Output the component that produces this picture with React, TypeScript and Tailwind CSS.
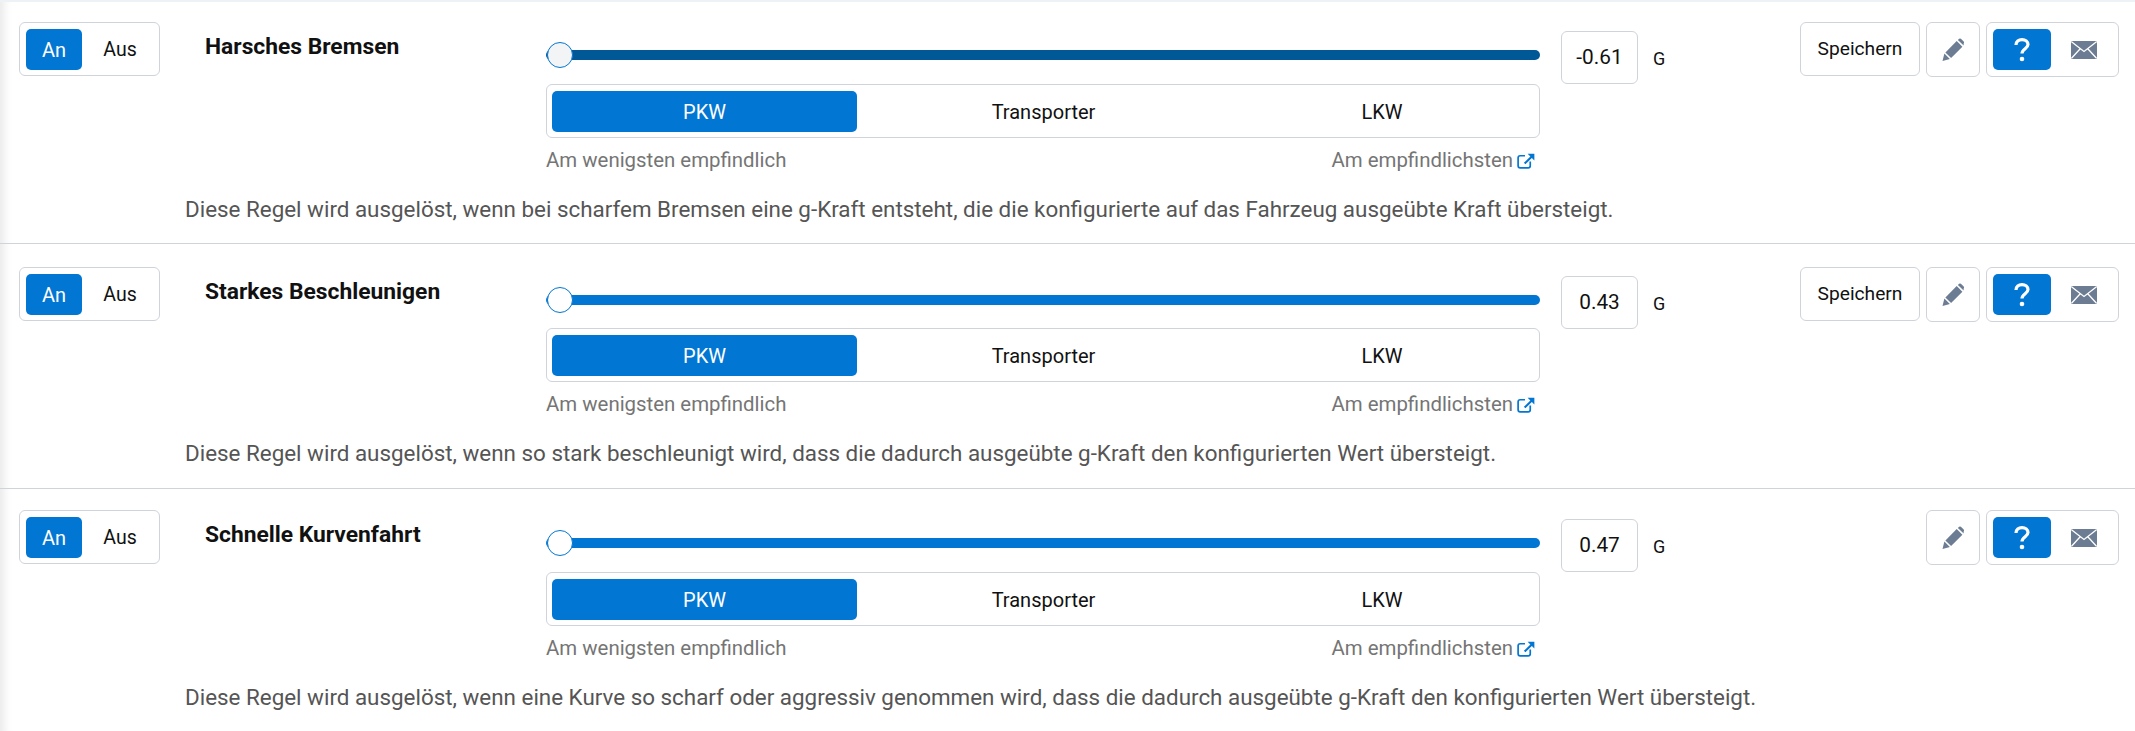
function PencilIcon() {
  return (
    <svg viewBox="0 0 24 24" className="h-[24px] w-[24px] fill-[#6b7c93]" aria-hidden>
      <path d="M1.5 23 L3.4 15.6 L8.9 21.1 Z" />
      <path d="M4.4 14.4 L15.7 3.1 L21.4 8.8 L10.1 20.1 Z" />
      <path d="M16.9 1.9 L18.1 0.8 Q19 0 19.9 0.8 L22.7 3.6 Q23.5 4.5 22.7 5.4 L22.6 7.6 Z" />
    </svg>
  );
}

function EnvelopeIcon() {
  return (
    <svg viewBox="0 0 26 18" className="h-[18px] w-[26px]" aria-hidden>
      <rect x="0" y="0" width="26" height="18" rx="1.5" fill="#6b7c93" />
      <path d="M0.5 0.8 L13 10.5 L25.5 0.8 M0.5 17.2 L9 8 M25.5 17.2 L17 8" fill="none" stroke="#fff" strokeWidth="1.3" />
    </svg>
  );
}

function QuestionIcon() {
  return (
    <svg viewBox="0 0 16 24" className="h-[24px] w-[16px]" aria-hidden>
      <path d="M2 7 C2 3.4 4.6 1.6 8 1.6 C11.4 1.6 14 3.6 14 6.6 C14 10.6 8 10.8 8 15.4" fill="none" stroke="#fff" strokeWidth="3.2" />
      <circle cx="8" cy="21" r="2.3" fill="#fff" />
    </svg>
  );
}

function ExternalIcon() {
  return (
    <svg viewBox="0 0 18 18" className="h-[19px] w-[19px]" aria-hidden>
      <path d="M13.5 10 V14 Q13.5 16 11.5 16 H4 Q2 16 2 14 V6.5 Q2 4.5 4 4.5 H8.5" fill="none" stroke="#0176d3" strokeWidth="1.6" />
      <path d="M7.5 11.2 L13.6 5.2 L11 2.6 H17.4 V9 L15 6.6 L8.9 12.6 Z" fill="#0176d3" />
    </svg>
  );
}

type Rule = {
  title: string;
  value: string;
  text: string;
  save: boolean;
  trackClass: string;
  thumbClass: string;
  rowClass: string;
  segmentClass: string;
};

const rules: Rule[] = [
  {
    title: "Harsches Bremsen",
    value: "-0.61",
    text: "Diese Regel wird ausgelöst, wenn bei scharfem Bremsen eine g-Kraft entsteht, die die konfigurierte auf das Fahrzeug ausgeübte Kraft übersteigt.",
    save: true,
    trackClass: "bg-[#015896]",
    thumbClass: "bg-[#f3f4f6]",
    rowClass: "h-[242px] pt-[20px] border-b border-[#cfd3da]",
    segmentClass: "mt-[16px]",
  },
  {
    title: "Starkes Beschleunigen",
    value: "0.43",
    text: "Diese Regel wird ausgelöst, wenn so stark beschleunigt wird, dass die dadurch ausgeübte g-Kraft den konfigurierten Wert übersteigt.",
    save: true,
    trackClass: "bg-[#0176d3]",
    thumbClass: "bg-white",
    rowClass: "h-[245px] pt-[23px] border-b border-[#cfd3da]",
    segmentClass: "mt-[15px]",
  },
  {
    title: "Schnelle Kurvenfahrt",
    value: "0.47",
    text: "Diese Regel wird ausgelöst, wenn eine Kurve so scharf oder aggressiv genommen wird, dass die dadurch ausgeübte g-Kraft den konfigurierten Wert übersteigt.",
    save: false,
    trackClass: "bg-[#0176d3]",
    thumbClass: "bg-white",
    rowClass: "pt-[21px]",
    segmentClass: "mt-[16px]",
  },
];

function RuleRow({ rule }: { rule: Rule }) {
  return (
    <div className={rule.rowClass}>
      <div className="flex items-start">
        {/* on/off toggle */}
        <div className="ml-[19px] flex h-[54px] w-[141px] items-center rounded-[6px] border border-[#cfd3da] pr-[5px] pl-[6px]">
          <div className="flex h-[41px] w-[56px] items-center justify-center rounded-[5px] bg-[#0176d3] pt-px text-[20px] text-white">An</div>
          <div className="flex h-[41px] flex-1 items-center justify-center pt-px pl-[4px] text-[19.5px] text-[#111]">Aus</div>
        </div>
        <div className="ml-[45px] w-[341px] pt-[10px] text-[22.8px] leading-[30px] font-bold text-[#111]">{rule.title}</div>

        {/* slider + vehicle class */}
        <div className="w-[994px]">
          <div className="relative mt-[20px] h-[26px]">
            <div className={`absolute top-[8px] right-0 left-0 h-[10px] rounded-full ${rule.trackClass}`} />
            <div className={`absolute top-0 left-[1px] h-[26px] w-[26px] rounded-full border border-[#0176d3] ${rule.thumbClass}`} />
          </div>
          <div className={`${rule.segmentClass} flex h-[54px] items-center rounded-[6px] border border-[#cfd3da] px-[5px] text-[20px] text-[#111]`}>
            <div className="flex h-[41px] w-[305px] items-center justify-center rounded-[5px] bg-[#0176d3] pt-px text-white">PKW</div>
            <div className="flex h-[41px] w-[373px] items-center justify-center pt-px">Transporter</div>
            <div className="flex h-[41px] flex-1 items-center justify-center pt-px">LKW</div>
          </div>
          <div className="mt-[8px] flex items-center justify-between pr-[5px] text-[20.4px] leading-[28px] text-[#757575]">
            <span>Am wenigsten empfindlich</span>
            <span className="flex items-center gap-[3px]">
              Am empfindlichsten
              <ExternalIcon />
            </span>
          </div>
        </div>

        {/* value */}
        <div className="mt-[9px] ml-[21px] flex h-[53px] w-[77px] items-center justify-center rounded-[6px] border border-[#cfd3da] text-[20.8px] text-[#111]">{rule.value}</div>
        <div className="mt-[10px] ml-[15px] flex h-[53px] items-center text-[18px] text-[#111]">G</div>

        {/* actions */}
        <div className="ml-auto flex gap-[6px] pr-[16px]">
          {rule.save && (
            <div className="flex h-[54px] w-[120px] items-center justify-center rounded-[6px] border border-[#cfd3da] pt-px text-[19.2px] text-[#111]">Speichern</div>
          )}
          <div className="flex h-[55px] w-[54px] items-center justify-center rounded-[6px] border border-[#cfd3da]">
            <PencilIcon />
          </div>
          <div className="flex h-[55px] w-[133px] items-center rounded-[6px] border border-[#cfd3da] pl-[6px]">
            <div className="flex h-[41px] w-[58px] items-center justify-center rounded-[5px] bg-[#0176d3]">
              <QuestionIcon />
            </div>
            <div className="ml-[20px]">
              <EnvelopeIcon />
            </div>
          </div>
        </div>
      </div>
      <p className="mt-[21px] pl-[185px] text-[22.4px] leading-[28px] text-[#555]">{rule.text}</p>
    </div>
  );
}

export default function App() {
  return (
    <div className="h-[731px] overflow-hidden border-t-2 border-[#eef2f6] bg-white font-[Roboto,sans-serif] shadow-[inset_12px_0_10px_-8px_rgba(0,0,0,0.09)]">
      {rules.map((rule) => (
        <RuleRow key={rule.title} rule={rule} />
      ))}
    </div>
  );
}
